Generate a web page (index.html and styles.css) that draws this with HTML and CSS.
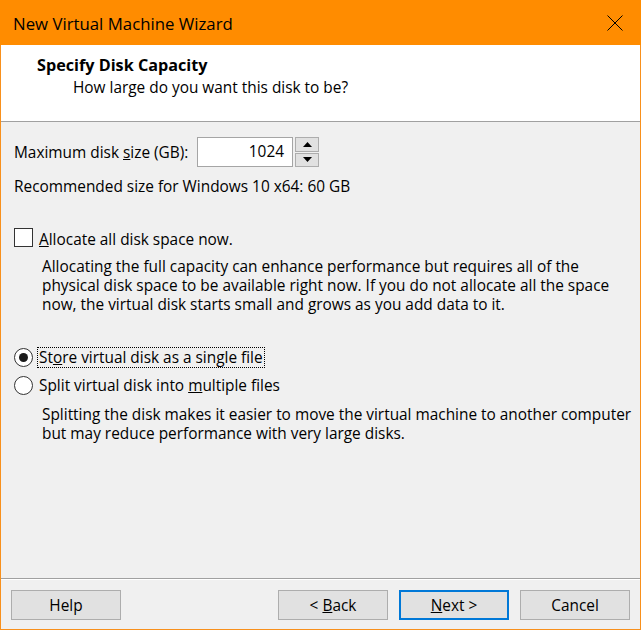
FILE: index.html
```html
<!DOCTYPE html>
<html>
<head>
<meta charset="utf-8">
<link rel="stylesheet" href="styles.css">
</head>
<body>
<div class="window">
  <div class="titlebar">
    <span class="title">New Virtual Machine Wizard</span>
    <svg class="close" width="16" height="16" viewBox="0 0 16 16"><path d="M0.5 0.5 L15.5 15.5 M15.5 0.5 L0.5 15.5" stroke="#000" stroke-width="1" fill="none"/></svg>
  </div>
  <div class="header">
    <div class="h-title">Specify Disk Capacity</div>
    <div class="h-sub">How large do you want this disk to be?</div>
  </div>
  <div class="content">
    <div class="size-row">
      <span class="label">Maximum disk <u>s</u>ize (GB):</span>
      <div class="spin">
        <div class="spin-input">1024</div>
        <div class="spin-btns">
          <div class="spin-btn"><svg width="9" height="5" viewBox="0 0 9 5"><path d="M0 5 L4.5 0 L9 5 Z" fill="#000"/></svg></div>
          <div class="spin-btn"><svg width="9" height="5" viewBox="0 0 9 5"><path d="M0 0 L4.5 5 L9 0 Z" fill="#000"/></svg></div>
        </div>
      </div>
    </div>
    <div class="recommend">Recommended size for Windows 10 x64: 60 GB</div>
    <div class="check-row">
      <span class="checkbox"></span>
      <span class="check-label"><u>A</u>llocate all disk space now.</span>
    </div>
    <div class="para p1">Allocating the full capacity can enhance performance but requires all of the<br>physical disk space to be available right now. If you do not allocate all the space<br>now, the virtual disk starts small and grows as you add data to it.</div>
    <div class="radio-row r1">
      <span class="radio checked"></span>
      <span class="radio-label focus">St<u>o</u>re virtual disk as a single file</span>
    </div>
    <div class="radio-row r2">
      <span class="radio"></span>
      <span class="radio-label">Split virtual disk into <u>m</u>ultiple files</span>
    </div>
    <div class="para p2">Splitting the disk makes it easier to move the virtual machine to another computer<br>but may reduce performance with very large disks.</div>
  </div>
  <div class="footer">
    <button class="btn">Help</button>
    <div class="spacer"></div>
    <button class="btn">&lt; <u>B</u>ack</button>
    <button class="btn primary"><u>N</u>ext &gt;</button>
    <button class="btn">Cancel</button>
  </div>
</div>
</body>
</html>
```
FILE: styles.css
```css
html, body {
  margin: 0;
  padding: 0;
  background: #f0f0f0;
}
body {
  font-family: "Open Sans", "Noto Sans", sans-serif;
  font-size: 15.4px;
  color: #000;
}
.window {
  width: 641px;
  height: 630px;
  box-sizing: border-box;
  border: 1px solid #f8901c;
  border-top: none;
  display: flex;
  flex-direction: column;
  background: #f0f0f0;
}
.titlebar {
  height: 45px;
  margin: 0 -1px;
  background: #ff8c00;
  display: flex;
  align-items: center;
  padding-left: 13px;
  padding-right: 18px;
  flex-shrink: 0;
}
.title {
  font-size: 16.8px;
  flex: 1;
  padding-top: 1px;
}
.close {
  display: block;
  margin-top: 1px;
}
.header {
  height: 76px;
  background: #fff;
  border-bottom: 1px solid #a0a0a0;
  flex-shrink: 0;
}
.h-title {
  font-weight: bold;
  font-size: 16.2px;
  padding-left: 36px;
  padding-top: 9px;
  line-height: 22px;
}
.h-sub {
  padding-left: 72px;
  line-height: 22px;
  padding-top: 1px;
}
.content {
  flex: 1;
  padding-left: 13px;
  line-height: 19px;
  white-space: nowrap;
}
.size-row {
  display: flex;
  align-items: center;
  margin-top: 15px;
  height: 30px;
}
.label {
  width: 183px;
}
.spin {
  display: flex;
  height: 30px;
}
.spin-input {
  width: 86px;
  padding-right: 8px;
  height: 28px;
  border: 1px solid #a5a5a5;
  background: #fff;
  text-align: right;
  line-height: 27px;
}
.spin-btns {
  display: flex;
  flex-direction: column;
  margin-left: 2px;
  gap: 1px;
}
.spin-btn {
  width: 22px;
  height: 13px;
  border: 1px solid #adadad;
  background: #e1e1e1;
  display: flex;
  align-items: center;
  justify-content: center;
}
.recommend {
  margin-top: 10px;
}
.check-row {
  display: flex;
  align-items: center;
  margin-top: 32px;
  height: 19px;
}
.checkbox {
  width: 17px;
  height: 17px;
  border: 1px solid #333;
  background: #fff;
  display: inline-block;
}
.check-label {
  margin-left: 6px;
  padding-top: 3px;
}
.para {
  padding-left: 28px;
}
.p1 {
  margin-top: 10px;
}
.radio-row {
  display: flex;
  align-items: center;
  height: 19px;
}
.r1 {
  margin-top: 34px;
}
.r2 {
  margin-top: 9px;
}
.radio {
  width: 17px;
  height: 17px;
  border: 1px solid #333;
  border-radius: 50%;
  background: #fff;
  display: inline-flex;
  align-items: center;
  justify-content: center;
}
.radio.checked::after {
  content: "";
  width: 9px;
  height: 9px;
  border-radius: 50%;
  background: #1a1a1a;
}
.radio-label {
  margin-left: 4px;
  padding: 0 1px;
  border: 1px dotted transparent;
}
.radio-label.focus {
  border-color: #000;
}
.p2 {
  margin-top: 10px;
  line-height: 19px;
}
.footer {
  flex-shrink: 0;
  height: 51px;
  border-top: 1px solid #a0a0a0;
  box-shadow: inset 0 1px 0 #fff;
  display: flex;
  align-items: flex-start;
  padding: 11px 10px 0 10px;
  gap: 11px;
  box-sizing: border-box;
}
.spacer {
  flex: 1;
}
.btn {
  width: 110px;
  height: 30px;
  border: 1px solid #adadad;
  background: #e1e1e1;
  font-family: inherit;
  font-size: 15.4px;
  color: #000;
  padding: 0;
  margin: 0;
}
.btn.primary {
  border: 2px solid #0078d7;
}
```
